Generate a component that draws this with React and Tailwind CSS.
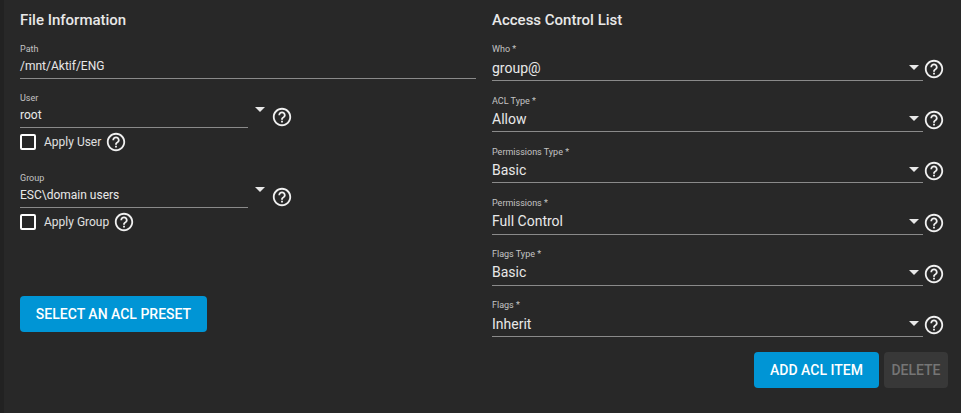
import React from "react";
import { MdHelpOutline } from "react-icons/md";

const Help = ({ className = "" }) => (
  <MdHelpOutline className={`text-[22px] text-[#f0f0f0] shrink-0 ${className}`} />
);

const Arrow = ({ className = "" }) => (
  <span className={`block w-0 h-0 border-x-[5px] border-x-transparent border-t-[5px] border-t-[#e8e8e8] ${className}`} />
);

const AclField = ({ label, value }) => (
  <div className="flex h-[51.2px] items-start">
    <div className="w-[431px] h-[42px] border-b border-[#8a8a8a] relative">
      <div className="text-[9px] leading-[12px] pt-[4.4px] box-content text-[#c4c4c4]">{label}</div>
      <div className="text-[14px] leading-[20px] mt-[2.2px] text-[#e8e8e8]">{value}</div>
      <Arrow className="absolute right-[4px] top-[26px]" />
    </div>
    <Help className="mt-[19px] ml-[-0.5px]" />
  </div>
);

const UserField = ({ label, value, apply }) => (
  <div className="h-[80px]">
    <div className="flex items-start">
      <div className="w-[228px] h-[40px] border-b border-[#8a8a8a]">
        <div className="text-[9px] leading-[12px] pt-[4px] box-content text-[#c4c4c4]">{label}</div>
        <div className="text-[12px] leading-[20px] mt-[1px] text-[#e8e8e8]">{value}</div>
      </div>
      <Arrow className="ml-[7px] mt-[19px]" />
      <Help className="ml-[6px] mt-[18px]" />
    </div>
    <div className="flex items-center mt-[3px] h-[22px]">
      <span className="w-[16px] h-[16px] border-2 border-white rounded-[2px]" />
      <span className="ml-[8px] text-[12px] text-[#e0e0e0]">{apply}</span>
      <Help className="ml-[3.5px]" />
    </div>
  </div>
);

export default function App() {
  return (
    <div className="w-[961px] h-[413px] overflow-hidden bg-[#282828] border-l-4 border-[#222222] flex font-['Roboto',sans-serif]">
      <div className="w-[472px] ml-[16px] shrink-0">
        <h2 className="text-[15px] leading-[20px] font-medium text-[#e8e8e8] mt-[10px]">File Information</h2>
        <div className="h-[40px] w-[456px] mt-[9px] border-b border-[#8a8a8a]">
          <div className="text-[9px] leading-[12px] pt-[4px] box-content text-[#c4c4c4]">Path</div>
          <div className="text-[12px] leading-[20px] mt-[1px] text-[#e8e8e8]">/mnt/Aktif/ENG</div>
        </div>
        <div className="mt-[9px]">
          <UserField label="User" value="root" apply="Apply User" />
          <UserField label="Group" value="ESC\domain users" apply="Apply Group" />
        </div>
        <button className="mt-[48px] w-[187px] h-[36px] rounded-[4px] bg-[#0095d5] text-white text-[14px] font-medium">
          SELECT AN ACL PRESET
        </button>
      </div>
      <div className="w-[456px]">
        <h2 className="text-[15px] leading-[20px] font-medium text-[#e8e8e8] mt-[10px]">Access Control List</h2>
        <div className="mt-[9px]">
          <AclField label="Who *" value="group@" />
          <AclField label="ACL Type *" value="Allow" />
          <AclField label="Permissions Type *" value="Basic" />
          <AclField label="Permissions *" value="Full Control" />
          <AclField label="Flags Type *" value="Basic" />
          <AclField label="Flags *" value="Inherit" />
        </div>
        <div className="flex justify-end gap-[5px] mt-[6px]">
          <button className="w-[125px] h-[36px] rounded-[4px] bg-[#0095d5] text-white text-[14px] font-medium">ADD ACL ITEM</button>
          <button className="w-[64px] h-[36px] rounded-[4px] bg-[#383838] text-[#757575] text-[14px] font-medium">DELETE</button>
        </div>
      </div>
    </div>
  );
}
